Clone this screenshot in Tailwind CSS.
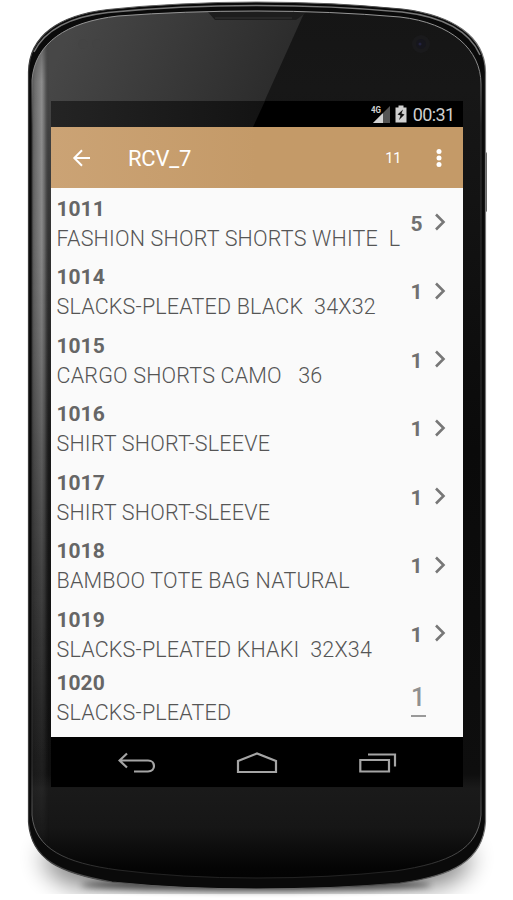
<!DOCTYPE html>
<html lang="en">
<head>
<meta charset="utf-8">
<title>RCV_7</title>
<script src="https://cdn.jsdelivr.net/npm/@tailwindcss/browser@4"></script>
</head>
<body class="bg-white">
<main class="relative h-[900px] w-[513px] overflow-hidden bg-white font-[Roboto,sans-serif]">
  <!-- Device body -->
  <svg class="absolute inset-0" width="513" height="900" viewBox="0 0 513 900" fill="none">
    <defs>
      <linearGradient id="edge" x1="28" y1="0" x2="486" y2="0" gradientUnits="userSpaceOnUse">
        <stop offset="0" stop-color="#3c3c3c"/><stop offset=".2" stop-color="#555"/><stop offset=".5" stop-color="#777"/><stop offset=".8" stop-color="#444"/><stop offset="1" stop-color="#777"/>
      </linearGradient>
      <linearGradient id="side" x1="30" y1="0" x2="49" y2="0" gradientUnits="userSpaceOnUse">
        <stop offset="0" stop-color="#444"/><stop offset=".25" stop-color="#6c6c6c"/><stop offset=".62" stop-color="#8e8e8e"/><stop offset=".78" stop-color="#666"/><stop offset="1" stop-color="#3a3a3a" stop-opacity="0"/>
      </linearGradient>
      <linearGradient id="sideFade" x1="0" y1="40" x2="0" y2="860" gradientUnits="userSpaceOnUse">
        <stop offset="0" stop-color="#666"/><stop offset=".05" stop-color="#fff"/><stop offset=".25" stop-color="#eee"/><stop offset=".65" stop-color="#666"/><stop offset="1" stop-color="#000"/>
      </linearGradient>
      <mask id="sideMask"><rect width="513" height="900" fill="url(#sideFade)"/></mask>
      <linearGradient id="face" x1="0" y1="0" x2="0" y2="900" gradientUnits="userSpaceOnUse">
        <stop offset="0" stop-color="#151515"/><stop offset=".1" stop-color="#171717"/><stop offset=".5" stop-color="#0a0a0a"/><stop offset=".86" stop-color="#0e0e0e"/><stop offset=".876" stop-color="#1a1a1a"/><stop offset=".92" stop-color="#161616"/><stop offset=".965" stop-color="#040404"/><stop offset="1" stop-color="#000"/>
      </linearGradient>
      <linearGradient id="glare" x1="70" y1="30" x2="290" y2="130" gradientUnits="userSpaceOnUse">
        <stop offset="0" stop-color="#474747"/><stop offset="1" stop-color="#282828"/>
      </linearGradient>
      <linearGradient id="leftBand" x1="0" y1="100" x2="0" y2="800" gradientUnits="userSpaceOnUse">
        <stop offset="0" stop-color="#444"/><stop offset=".5" stop-color="#181818"/><stop offset="1" stop-color="#181818" stop-opacity="0"/>
      </linearGradient>
      <linearGradient id="rim" x1="0" y1="0" x2="0" y2="900" gradientUnits="userSpaceOnUse">
        <stop offset="0" stop-color="#999"/><stop offset=".08" stop-color="#888"/><stop offset=".14" stop-color="#333"/><stop offset=".85" stop-color="#333"/><stop offset=".93" stop-color="#666"/><stop offset=".97" stop-color="#222"/>
      </linearGradient>
      <clipPath id="faceClip"><path d="M32 80C35 43 66 22 118 16Q184 11 257 11Q330 11 400 17C452 23 481 50 481 84V815C478 849 450 863 395 871Q330 878 257 878Q180 878 118 870C65 863 35 849 32 815Z"/></clipPath>
      <filter id="soft" x="-20%" y="-100%" width="140%" height="300%"><feGaussianBlur stdDeviation="12"/></filter>
      <filter id="tight" x="-20%" y="-100%" width="140%" height="300%"><feGaussianBlur stdDeviation="3"/></filter>
      <clipPath id="floor"><rect y="780" width="513" height="114"/></clipPath>
    </defs>
    <g clip-path="url(#floor)">
      <path d="M42 850Q44 884 90 888H424Q470 884 472 850Z" fill="#000" opacity=".48" filter="url(#soft)"/>
    </g>
    <ellipse cx="256" cy="885" rx="175" ry="6" fill="#000" opacity=".6" filter="url(#tight)"/>
    <rect x="483.500" y="152" width="3.500" height="60" rx="1.500" fill="#666"/>
    <path d="M28.500 72C29 35 60 15 108 9.500Q180 2 257 2Q333 2 402 9C452 15 485 36 485.500 72V822C483 861 452 876 400 883Q333 889 257 889Q180 889 112 882C60 873 31 860 28.500 822Z" fill="#0a0a0a" stroke="url(#edge)" stroke-width="1.200"/>
    <path d="M34 52C45 30 68 17 108 12.500Q180 5.500 257 5.500Q333 5.500 402 12C445 17 470 32 480 55" stroke="#777" stroke-width="1.500"/>
    <g clip-path="url(#faceClip)">
      <rect x="28" width="460" height="900" fill="url(#face)"/>
      <path d="M28 0H310L247 140H28Z" fill="url(#glare)"/>
      <path d="M28 100H51V888H28Z" fill="url(#leftBand)"/>
      <rect x="28" y="10" width="24" height="870" fill="url(#side)" mask="url(#sideMask)"/>
      <path d="M207 11L215 20H296L308 11Z" fill="#1d1d1d"/>
      <path d="M215 18H292" stroke="#343434"/>
    </g>
    <path d="M32 80C35 43 66 22 118 16Q184 11 257 11Q330 11 400 17C452 23 481 50 481 84V815C478 849 450 863 395 871Q330 878 257 878Q180 878 118 870C65 863 35 849 32 815Z" stroke="url(#rim)" stroke-width="1"/>
    <circle cx="421" cy="44" r="9" fill="#1a1a1c"/><circle cx="421" cy="44" r="5" fill="#16161d"/><circle cx="420" cy="44" r="1.500" fill="#232340"/>
    <circle cx="83" cy="44" r="5" fill="#444"/><circle cx="97" cy="44" r="5" fill="#434343"/>
  </svg>

  <!-- Screen -->
  <div class="relative mt-[101px] ml-[51px] flex h-[686px] w-[411.500px] flex-col bg-black">
    <header class="relative flex h-[26px] shrink-0 items-center justify-end pr-[8px] text-[#cfcfcf]">
      <svg class="absolute top-0 left-0" width="214" height="26" viewBox="0 0 214 26"><defs><linearGradient id="bar"><stop stop-color="#242424"/><stop offset="1" stop-color="#131313"/></linearGradient></defs><path d="M0 0H214L202 26H0Z" fill="url(#bar)"/></svg>
      <svg class="mr-[4px]" width="20" height="20" viewBox="0 0 20 20"><path d="M19 2V19H2Z" fill="#555"/><path d="M12 9V19H2Z" fill="#d2d2d2"/><rect width="11.500" height="9.500" fill="#000"/><text x="0" y="8.500" font-size="8.500" font-weight="700" fill="#d2d2d2" textLength="10" lengthAdjust="spacingAndGlyphs">4G</text></svg>
      <svg class="mr-[6px]" width="12" height="18" viewBox="0 0 12 18"><path d="M1 2.500H3.500V.5H8.500V2.500H11.500V17.500H.5V2.500Z" fill="#d0d0d0"/><path d="M8 4.500L2.500 9.500L5.500 10.500L4 15L9.500 9.500L6.500 8.500Z" fill="#111"/></svg>
      <span class="pt-px text-[18px] leading-[26px] tracking-[-0.6px]">00:31</span>
    </header>
    <div class="flex h-[60.500px] shrink-0 items-center bg-linear-to-r from-[#cba375] to-[#c49a68] to-50% pt-[2px] text-white">
      <svg class="ml-[21px]" width="20" height="20" viewBox="0 0 20 20" fill="none" stroke="#fff" stroke-width="2"><path d="M18 10H2.500M10 2.300L2.300 10L10 17.700"/></svg>
      <h1 class="ml-[36px] pt-[2px] text-[22px] leading-[58px] tracking-[-0.2px]">RCV_7</h1>
      <span class="ml-auto pt-px text-[14.500px] leading-[58px]">11</span>
      <svg class="mr-[21px] ml-[34px]" width="6" height="20" viewBox="0 0 6 20" fill="#fff"><circle cx="3" cy="3.500" r="2.500"/><circle cx="3" cy="10" r="2.500"/><circle cx="3" cy="16.500" r="2.500"/></svg>
    </div>
    <ul id="items" class="h-[549px] shrink-0 overflow-hidden bg-[#fafafa] pt-[7px] text-[#666]"></ul>
    <nav class="flex h-[50px] items-center pt-[4px] pl-[67px]">
      <svg width="38" height="24" viewBox="0 0 38 24" fill="none" stroke="#a5a5a5" stroke-width="2.200"><path d="M9 1.500L1.500 8.500L9 15.500M1.500 8.500H30C38 8.500 38 19.500 30 19.500H16"/></svg>
      <svg class="ml-[79px]" width="44" height="24" viewBox="0 0 44 24" fill="none" stroke="#a5a5a5" stroke-width="2.200"><path d="M3 20V9L22 1.500L41 9V20Z"/></svg>
      <svg class="ml-[79px]" width="40" height="24" viewBox="0 0 40 24" fill="none" stroke="#a5a5a5" stroke-width="2.200"><path d="M2.300 8H31V19.500H2.300ZM10 2.500H37V14.500"/></svg>
    </nav>
  </div>
</main>
<script>
const items = [
  ['1011', 'FASHION SHORT SHORTS WHITE  L', 5],
  ['1014', 'SLACKS-PLEATED BLACK  34X32', 1],
  ['1015', 'CARGO SHORTS CAMO   36', 1],
  ['1016', 'SHIRT SHORT-SLEEVE', 1],
  ['1017', 'SHIRT SHORT-SLEEVE', 1],
  ['1018', 'BAMBOO TOTE BAG NATURAL', 1],
  ['1019', 'SLACKS-PLEATED KHAKI  32X34', 1],
  ['1020', 'SLACKS-PLEATED', 1]
];
document.getElementById('items').innerHTML = items.map(([id, name, qty], i) => `
  <li class="flex ${i === 6 ? 'h-[63px]' : 'h-[68.500px]'} items-start pl-[5.500px]">
    <div class="w-[354px] shrink-0">
      <p class="text-[21px] leading-[29px] font-bold">${id}</p>
      <p class="text-[21.500px] leading-[29px] font-light tracking-[0.19px] whitespace-pre text-[#555]">${name}</p>
    </div>
    ${i === 7
      ? '<span class="mt-[11px] w-[15px] border-b-2 border-[#999] text-center text-[25px] leading-[35px] font-medium text-[#909090]">1</span>'
      : `<span class="w-[12px] text-[21px] leading-[58px] font-bold text-[#707070]">${qty}</span>
    <svg class="mt-[17.500px] ml-[11px]" width="13" height="20" viewBox="0 0 13 20" fill="none" stroke="#777" stroke-width="2.600"><path d="M2 2.500L9.500 10L2 17.500"/></svg>`}
  </li>`).join('');
</script>
</body>
</html>
